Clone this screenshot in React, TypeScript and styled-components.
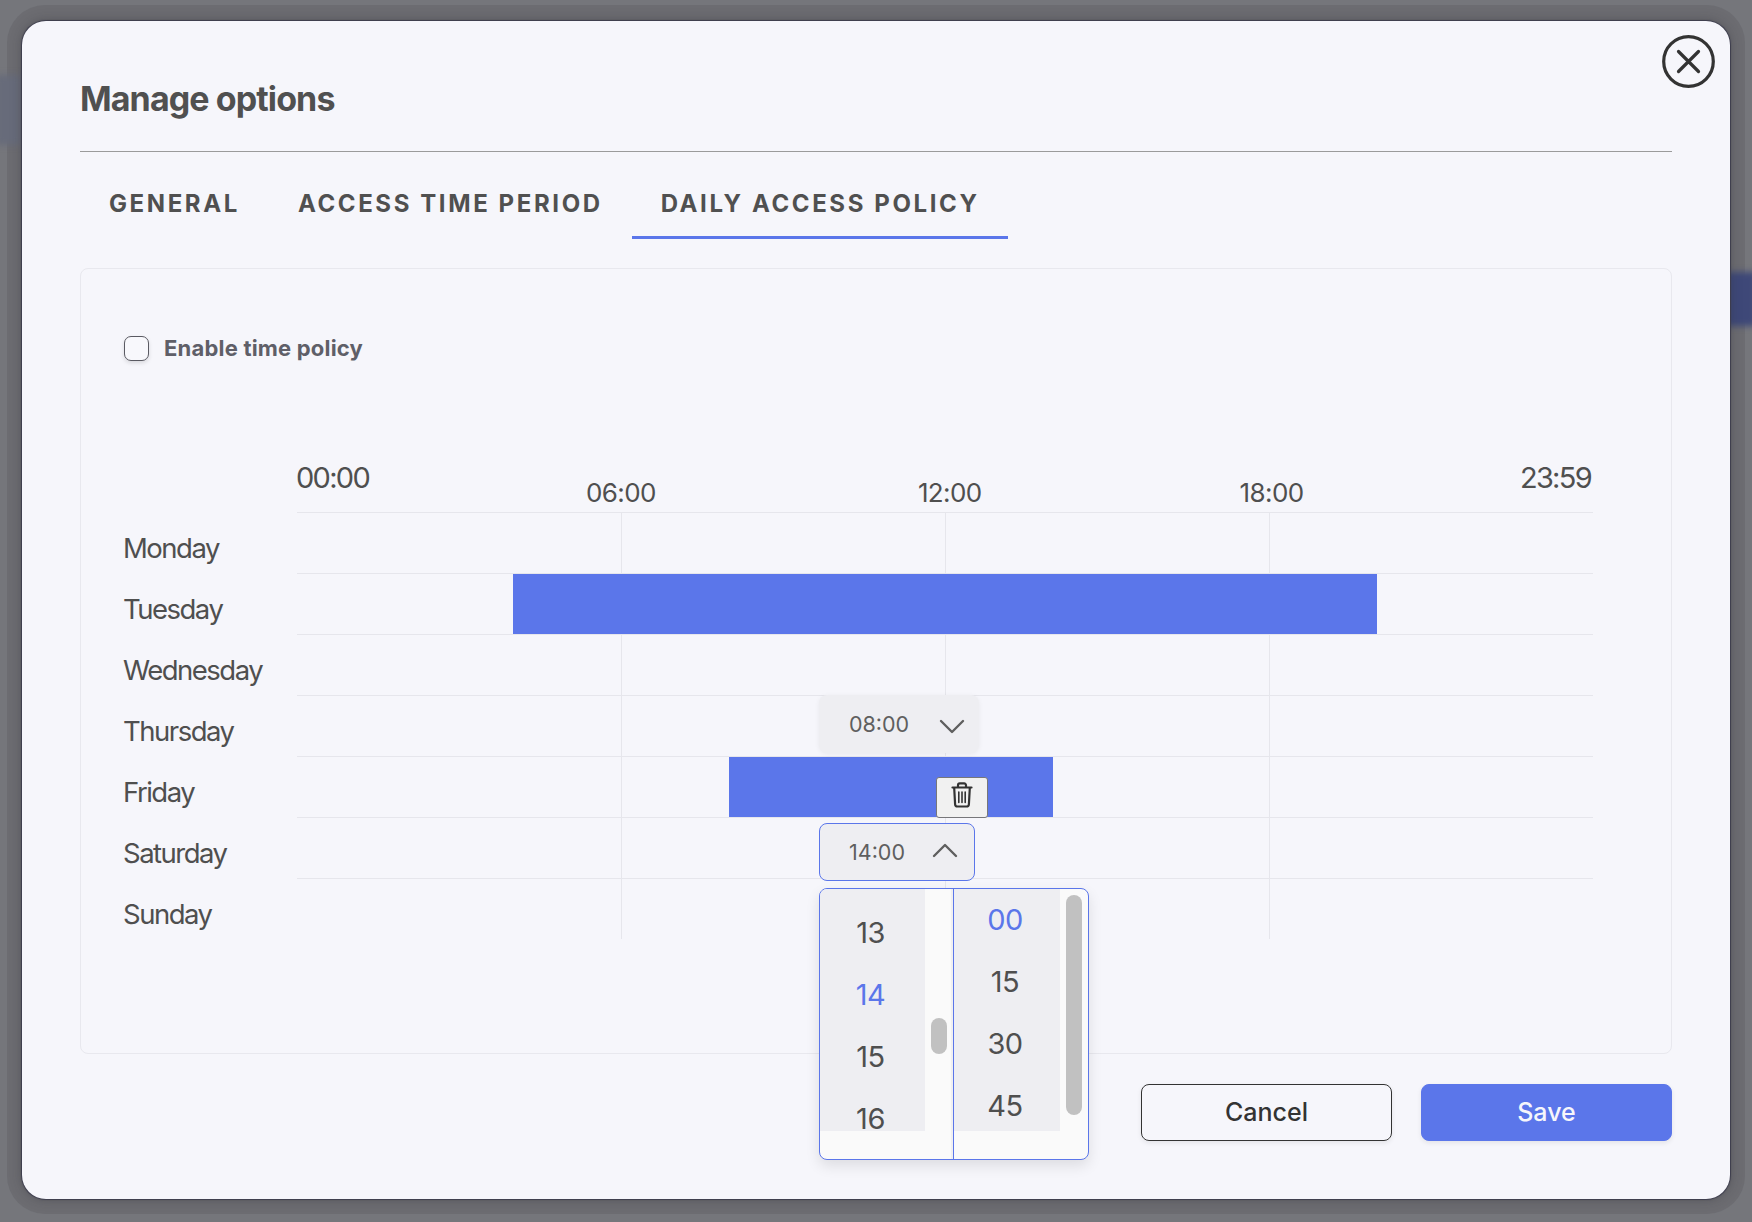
import React, { FC } from 'react';
import styled, { createGlobalStyle } from 'styled-components';

const BLUE = '#5b76ea';

const GlobalStyle = createGlobalStyle`
  html, body {
    margin: 0;
    padding: 0;
    background: #75767b;
  }
  * {
    box-sizing: border-box;
  }
  body {
    font-family: Inter, "Liberation Sans", sans-serif;
    color: #4f4f4f;
  }
`;

const Backdrop = styled.div`
  position: relative;
  width: 1752px;
  height: 1222px;
  padding: 5px 7px 8px;
  background: #75767b;
  overflow: hidden;
`;

// blurred page content showing through behind the modal
const BackdropStripe = styled.div<{ $side: 'left' | 'right' }>`
  position: absolute;
  filter: blur(3px);
  ${({ $side }) =>
    $side === 'right'
      ? 'right: -4px; top: 272px; width: 30px; height: 54px; background: #3e4878;'
      : 'left: -4px; top: 75px; width: 26px; height: 70px; background: #676b7a;'}
`;

const ModalRing = styled.div`
  position: relative;
  height: 100%;
  padding: 16px 15px 15px;
  border-radius: 38px;
  background: rgba(100, 101, 105, 0.55);
`;

const Modal = styled.div`
  position: relative;
  z-index: 1;
  height: 100%;
  padding: 0 58px;
  border-radius: 24px;
  background: #f6f6fb;
  box-shadow:
    0 0 1px 1px #3c3c4c,
    0 0 12px rgba(40, 40, 45, 0.35);
`;

const CloseButton = styled.button`
  position: absolute;
  top: 14px;
  right: 15px;
  width: 53px;
  height: 53px;
  padding: 0;
  border: 0;
  background: none;
  color: #333;
  svg {
    display: block;
  }
`;

const Title = styled.h2`
  display: flex;
  align-items: center;
  height: 131px;
  margin: 0;
  padding-top: 24px;
  font-size: 34px;
  font-weight: 700;
  letter-spacing: -0.9px;
  color: #505050;
  border-bottom: 1px solid #9b9b9b;
`;

const Tabs = styled.div`
  display: flex;
  gap: 1px;
  height: 87px;
`;

const Tab = styled.div<{ $active?: boolean }>`
  display: flex;
  align-items: center;
  padding: 18px 28px 0 29px;
  font-size: 24px;
  font-weight: 700;
  letter-spacing: 2.6px;
  color: #505050;
  border-bottom: 3px solid ${({ $active }) => ($active ? BLUE : 'transparent')};
`;

const Card = styled.section`
  height: 786px;
  margin-top: 29px;
  padding: 67px 78px 0 43px;
  border: 1px solid #e8e8ee;
  border-radius: 8px;
`;

const PolicyRow = styled.label`
  display: flex;
  align-items: center;
  gap: 15px;
  height: 25px;
  padding-bottom: 2px;
  font-size: 22px;
  font-weight: 700;
  letter-spacing: 0.2px;
  color: #5f5f68;
`;

const Checkbox = styled.span`
  flex: none;
  width: 25px;
  height: 25px;
  margin-bottom: -2px;
  border: 1px solid #5a5a62;
  border-radius: 7px;
  background: #f8f8fc;
  box-shadow: 0 2px 4px rgba(0, 0, 0, 0.12);
`;

const Chart = styled.div`
  position: relative;
  margin-top: 92px;
`;

const TimeHeader = styled.div`
  display: flex;
  align-items: flex-end;
  height: 59px;
  margin-left: 173px;
  padding-right: 2px;
`;

const TimeLabel = styled.span<{ $offset?: number; $edge?: boolean }>`
  margin-left: ${({ $offset }) => ($offset === undefined ? 'auto' : `${$offset}px`)};
  padding-bottom: ${({ $edge }) => ($edge ? '16px' : '4px')};
  font-size: ${({ $edge }) => ($edge ? '29px' : '26px')};
  line-height: 1.2;
  letter-spacing: ${({ $edge }) => ($edge ? '-1.7px' : '-0.6px')};
  color: #4f4f4f;
`;

const DayRow = styled.div`
  display: grid;
  grid-template-columns: 173px 1fr;
  height: 61px;
  &:first-of-type {
    height: 62px;
  }
`;

const DayName = styled.span`
  margin-left: -1px;
  padding-top: 19px;
  font-size: 27.5px;
  line-height: 34px;
  letter-spacing: -1.5px;
  color: #4f4f4f;
`;

const Track = styled.div`
  position: relative;
  display: grid;
  grid-template-columns: repeat(4, 1fr);
  border-top: 1px solid #e6e6ec;
`;

const Hour = styled.span`
  & + & {
    border-left: 1px solid #e6e6ec;
  }
`;

const Bar = styled.div<{ $from: number; $to: number }>`
  position: absolute;
  top: 0;
  bottom: 0;
  left: ${({ $from }) => ($from / 24) * 100}%;
  width: ${({ $from, $to }) => (($to - $from) / 24) * 100}%;
  background: ${BLUE};
`;

const TimeSelect = styled.div<{ $open?: boolean; $top: number }>`
  position: absolute;
  left: 695px;
  top: ${({ $top }) => $top}px;
  display: flex;
  align-items: center;
  justify-content: space-between;
  width: ${({ $open }) => ($open ? 156 : 160)}px;
  height: 58px;
  padding: 0 ${({ $open }) => ($open ? 16 : 13)}px 0 29px;
  border: 1px solid ${({ $open }) => ($open ? BLUE : 'transparent')};
  border-radius: 8px;
  background: #eeeef2;
  font-size: 21.5px;
  color: #5f5f5f;
  box-shadow: ${({ $open }) => ($open ? 'none' : '0 1px 5px rgba(0, 0, 0, 0.06)')};
  svg {
    margin: ${({ $open }) => ($open ? '0 0 4px' : '3px 0 0')};
  }
`;

const DeleteButton = styled.button`
  position: absolute;
  left: 812px;
  top: 324px;
  display: flex;
  align-items: center;
  justify-content: center;
  width: 52px;
  height: 41px;
  padding: 0 0 5px;
  border: 1px solid #77777a;
  border-radius: 3px;
  background: #f1f1f1;
  color: #333;
`;

const Dropdown = styled.div`
  position: absolute;
  left: 695px;
  top: 435px;
  display: grid;
  grid-template-columns: 133px 1fr;
  width: 270px;
  height: 272px;
  border: 1px solid ${BLUE};
  border-radius: 8px;
  background: #fafafa;
  box-shadow: 0 6px 14px rgba(0, 0, 0, 0.1);
  overflow: hidden;
`;

const Column = styled.div<{ $divided?: boolean }>`
  display: flex;
  height: 100%;
  border-left: ${({ $divided }) => ($divided ? `1px solid ${BLUE}` : '0')};
  border-right: 2px solid ${({ $divided }) => ($divided ? 'transparent' : '#f0f0f2')};
`;

const NumberList = styled.div<{ $width: number; $pad: number }>`
  display: flex;
  flex-direction: column;
  align-items: center;
  width: ${({ $width }) => $width}px;
  height: 242px;
  padding: ${({ $pad }) => $pad}px 4px 0 0;
  background: #eeeef2;
`;

const NumberItem = styled.span<{ $selected?: boolean }>`
  flex: none;
  height: 62px;
  font-size: 29px;
  line-height: 62px;
  letter-spacing: -0.5px;
  color: ${({ $selected }) => ($selected ? BLUE : '#4f4f4f')};
`;

const ScrollThumb = styled.div<{ $top: number; $height: number }>`
  flex: none;
  width: 16px;
  height: ${({ $height }) => $height}px;
  margin: ${({ $top }) => $top}px 0 0 6px;
  border-radius: 8px;
  background: #c1c1c1;
`;

const Footer = styled.footer`
  display: flex;
  justify-content: flex-end;
  gap: 29px;
  margin-top: 30px;
`;

const Button = styled.button<{ $primary?: boolean }>`
  width: 251px;
  height: 57px;
  padding: 0 0 2px;
  border: 1px solid ${({ $primary }) => ($primary ? BLUE : '#333')};
  border-radius: 8px;
  background: ${({ $primary }) => ($primary ? BLUE : 'transparent')};
  color: ${({ $primary }) => ($primary ? '#f6f6fb' : '#333')};
  font-family: inherit;
  font-size: 25px;
  font-weight: 500;
  box-shadow: 0 2px 5px rgba(0, 0, 0, 0.08);
`;

const Chevron: FC<{ up?: boolean }> = ({ up }) => (
  <svg width="26" height="16" viewBox="0 0 26 16" fill="none" stroke="currentColor" strokeWidth="2.4" strokeLinecap="round" strokeLinejoin="round">
    <polyline points={up ? '2,14 13,3 24,14' : '2,3 13,14 24,3'} />
  </svg>
);

const TrashIcon: FC = () => (
  <svg width="22" height="26" viewBox="0 0 22 26" fill="none" stroke="currentColor" strokeWidth="2.2" strokeLinecap="round" strokeLinejoin="round">
    <path d="M1.5 5.5h19" />
    <path d="M7 5V3.2a1.8 1.8 0 0 1 1.8-1.8h4.4A1.8 1.8 0 0 1 15 3.2V5" />
    <path d="M3.2 6l.9 16.2a2.4 2.4 0 0 0 2.4 2.3h9a2.4 2.4 0 0 0 2.4-2.3L18.800 6" />
    <path d="M7.8 10v10.5M11 10v10.5M14.2 10v10.5" strokeWidth="1.6" />
  </svg>
);

const CloseIcon: FC = () => (
  <svg width="53" height="53" viewBox="0 0 53 53" fill="none" stroke="currentColor" strokeLinecap="round">
    <circle cx="26.5" cy="26.5" r="24.8" strokeWidth="3.2" />
    <path d="M16.5 16.500l20 20M36.5 16.500l-20 20" strokeWidth="3.2" />
  </svg>
);

const days = ['Monday', 'Tuesday', 'Wednesday', 'Thursday', 'Friday', 'Saturday', 'Sunday'];

const ranges: Record<string, [number, number]> = {
  Tuesday: [4, 20],
  Friday: [8, 14],
};

export default function App() {
  return (
    <Backdrop>
      <GlobalStyle />
      <ModalRing>
        <Modal>
          <CloseButton aria-label="Close">
            <CloseIcon />
          </CloseButton>
          <Title>Manage options</Title>
          <Tabs>
            <Tab>GENERAL</Tab>
            <Tab>ACCESS TIME PERIOD</Tab>
            <Tab $active>DAILY ACCESS POLICY</Tab>
          </Tabs>
          <Card>
            <PolicyRow>
              <Checkbox />
              Enable time policy
            </PolicyRow>
            <Chart>
              <TimeHeader>
                <TimeLabel $offset={-1} $edge>00:00</TimeLabel>
                <TimeLabel $offset={217}>06:00</TimeLabel>
                <TimeLabel $offset={262}>12:00</TimeLabel>
                <TimeLabel $offset={258}>18:00</TimeLabel>
                <TimeLabel $edge>23:59</TimeLabel>
              </TimeHeader>
              {days.map((day) => {
                const range = ranges[day];
                return (
                  <DayRow key={day}>
                    <DayName>{day}</DayName>
                    <Track>
                      <Hour />
                      <Hour />
                      <Hour />
                      <Hour />
                      {range && <Bar $from={range[0]} $to={range[1]} />}
                    </Track>
                  </DayRow>
                );
              })}
              <TimeSelect $top={242}>
                08:00
                <Chevron />
              </TimeSelect>
              <DeleteButton aria-label="Delete">
                <TrashIcon />
              </DeleteButton>
              <TimeSelect $open $top={370}>
                14:00
                <Chevron up />
              </TimeSelect>
              <Dropdown>
                <Column>
                  <NumberList $width={105} $pad={13}>
                    <NumberItem>13</NumberItem>
                    <NumberItem $selected>14</NumberItem>
                    <NumberItem>15</NumberItem>
                    <NumberItem>16</NumberItem>
                  </NumberList>
                  <ScrollThumb $top={129} $height={36} />
                </Column>
                <Column $divided>
                  <NumberList $width={106} $pad={0}>
                    <NumberItem $selected>00</NumberItem>
                    <NumberItem>15</NumberItem>
                    <NumberItem>30</NumberItem>
                    <NumberItem>45</NumberItem>
                  </NumberList>
                  <ScrollThumb $top={6} $height={220} />
                </Column>
              </Dropdown>
            </Chart>
          </Card>
          <Footer>
            <Button>Cancel</Button>
            <Button $primary>Save</Button>
          </Footer>
        </Modal>
      </ModalRing>
      <BackdropStripe $side="left" />
      <BackdropStripe $side="right" />
    </Backdrop>
  );
}
